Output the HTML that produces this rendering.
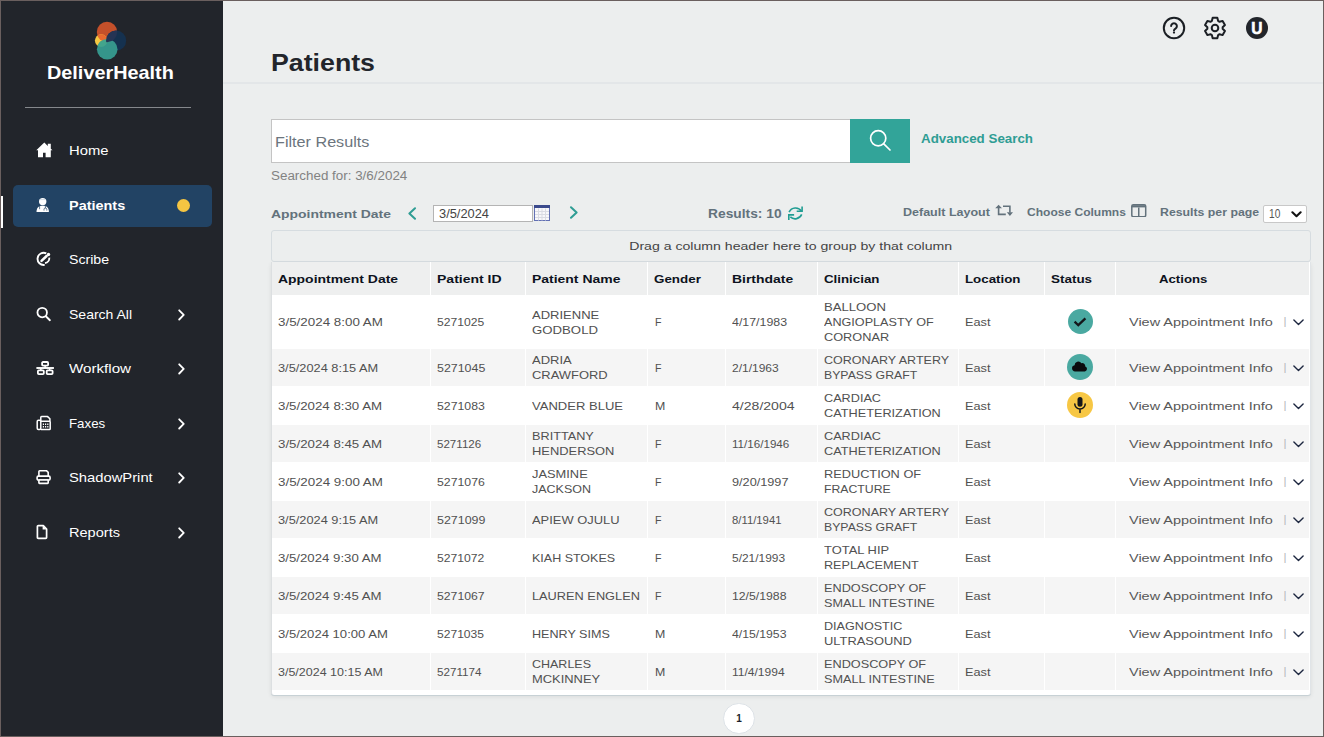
<!DOCTYPE html>
<html lang="en">
<head>
<meta charset="utf-8">
<title>Patients</title>
<style>
*{box-sizing:border-box;margin:0;padding:0}
html,body{width:1324px;height:737px;overflow:hidden}
body{font-family:"Liberation Sans",sans-serif;background:#eceeee;color:#444;position:relative;font-size:12px}
.abs{position:absolute}
.sx{display:inline-block;transform-origin:0 50%;white-space:nowrap}
.sx.ln{display:block;width:max-content}
.sx.c{transform-origin:50% 50%}
.sx.s1{position:relative;top:1px}
tr.r1 .sx.ln{position:relative;top:1px}
#frame{position:absolute;left:0;top:0;width:1324px;height:737px;border-top:1px solid #6a5f5e;border-left:1px solid #6a5f5e;border-right:1px solid #6a5f5e;border-bottom:1px solid #6a5f5e;pointer-events:none;z-index:50}
#side{position:absolute;left:0;top:0;width:223px;height:737px;background:#22252b}
#brand{position:absolute;left:46.6px;top:62px;color:#fff;font-weight:bold;font-size:19px;line-height:22px;white-space:nowrap}
#sidehr{position:absolute;left:25px;top:107px;width:166px;height:1px;background:#85888c}
.nav{position:absolute;left:13px;width:199px;height:42px;border-radius:5px;color:#fff;font-size:13.500px}
.nav.on{background:#224364;font-weight:bold}
.nav .lbl{position:absolute;left:56.3px;top:0;line-height:41px;white-space:nowrap}
.nav svg{position:absolute}
.nav .chev{left:165.100px;top:14.600px}
#bar{position:absolute;left:1px;top:196px;width:2px;height:32px;background:#fff}
#dot{position:absolute;left:176.5px;top:199px;width:13px;height:13px;border-radius:50%;background:#f5c542}
#hdrline{position:absolute;left:223px;top:82px;width:1101px;height:2px;background:#e3e6e8}
#sedge{position:absolute;left:222px;top:0;width:1px;height:737px;background:#17191d}
#sedge2{position:absolute;left:223px;top:0;width:1px;height:737px;background:#f9fafa}
#title{position:absolute;left:270.6px;top:47px;font-size:24px;font-weight:bold;color:#22252b;line-height:32px;white-space:nowrap}
#search{position:absolute;left:271px;top:119px;width:580px;height:44px;background:#fff;border:1px solid #c4c4c4}
#search .ph{position:absolute;left:3px;top:1px;line-height:43px;font-size:14.5px;color:#6c757d;white-space:nowrap}
#sbtn{position:absolute;left:850px;top:119px;width:60px;height:44px;background:#32a499}
#adv{position:absolute;left:921px;top:130px;font-size:12.5px;font-weight:bold;color:#2f9d94;line-height:18px;white-space:nowrap}
#sfor{position:absolute;left:270.6px;top:167px;font-size:12.5px;color:#828282;line-height:18px;white-space:nowrap}
#apl{position:absolute;left:271.4px;top:205px;font-size:11.500px;font-weight:bold;color:#63727c;line-height:18px;white-space:nowrap}
#dinp{position:absolute;left:433px;top:205px;width:100px;height:17px;background:#fff;border:1px solid #b4b4b4;font-size:12px;line-height:16px;padding-left:5px;color:#444;white-space:nowrap}
#res{position:absolute;left:707.600px;top:205px;font-size:13px;font-weight:bold;color:#63727c;line-height:18px;white-space:nowrap}
.tool{position:absolute;top:203px;font-size:11px;font-weight:bold;color:#63727c;line-height:18px;white-space:nowrap}
#sel{position:absolute;left:1263px;top:205px;width:44px;height:18px;background:#fff;border:1px solid #c8c8c8;border-radius:2px;font-size:12px;line-height:17px;padding-left:4.5px;color:#555}
#grp{position:absolute;left:271px;top:230px;width:1040px;height:32px;border:1px solid #d6dce0;border-radius:3px;text-align:center;line-height:30px;font-size:11.500px;color:#444;white-space:nowrap}
#tblwrap{position:absolute;left:271px;top:262px;width:1040px;height:433px;border-left:1px solid #dcdfe1;border-right:1px solid #e0e4e7;background:#fff;border-radius:0 0 3px 3px;box-shadow:0 1px 0 rgba(170,190,200,.45),0 2px 4px rgba(0,0,0,.08)}
#tbl{border-collapse:separate;border-spacing:0;table-layout:fixed;width:1038px;font-size:11.500px}
#tbl th{height:33px;background:#eeefef;text-align:left;font-weight:bold;color:#0d1220;padding:0 0 0 6px;border-left:1px solid #fff;white-space:nowrap}
#tbl th:first-child,#tbl td:first-child{border-left:none}
#tbl th:last-child,#tbl td:last-child{border-right:1px solid #fff}
#tbl td{height:38px;padding:0 0 0 6px;border-left:1px solid #fff;border-bottom:1px solid #fff;line-height:15px;color:#515151;vertical-align:middle;white-space:nowrap}
#tbl tr.r1 td{height:54px}
#tbl tr.alt td{background:#f5f5f5}
.st{display:block;width:25px;height:25px;border-radius:50%;margin-left:16.600px;position:relative}
.st.b{width:26px;height:26px;margin-left:16px;top:-1px}
.st svg{position:absolute;left:50%;top:50%;transform:translate(-50%,-50%)}
.teal{background:#4aa9a1}.yel{background:#f7c744}
td.act{position:relative}
.va{position:absolute;left:13px;top:50%;margin-top:-6.800px;color:#585858}
.pipe{position:absolute;left:167.500px;top:50%;margin-top:-7.800px;color:#b4b8bc}
.dd{position:absolute;left:177.400px;top:50%;margin-top:-2.800px}
#pg{position:absolute;left:723.400px;top:702.600px;width:31.200px;height:31.200px;border-radius:50%;background:#fff;border:1px solid #dde2e7;text-align:center;line-height:30.500px;font-size:10px;font-weight:bold;color:#1a1f2b}
.top{position:absolute;top:16px;width:24px;height:24px}
#usr{position:absolute;left:1246px;top:16.700px;width:22.200px;height:22.200px;border-radius:50%;background:#22252b;color:#fff;font-weight:bold;font-size:16px;line-height:24.500px;text-align:center;-webkit-text-stroke:.6px #fff}
</style>
</head>
<body>
<div id="side">
  <svg class="abs" style="left:90px;top:18px" width="40" height="46" viewBox="90 18 40 46">
    <circle cx="107" cy="32" r="10.2" fill="#c4502a"/>
    <circle cx="116.100" cy="40.700" r="10.100" fill="#15314f"/>
    <circle cx="101.2" cy="40.6" r="6.3" fill="#f5c842"/>
    <circle cx="107.200" cy="49.300" r="10.300" fill="#35958b"/>
    <clipPath id="cy"><circle cx="101.2" cy="40.6" r="6.3"/></clipPath>
    <circle cx="107" cy="32" r="10.2" fill="#e8692f" clip-path="url(#cy)"/>
    <circle cx="107.200" cy="49.300" r="10.300" fill="#43a48c" clip-path="url(#cy)"/>
    <clipPath id="cn"><circle cx="116.100" cy="40.700" r="10.100"/></clipPath>
    <circle cx="107" cy="32" r="10.2" fill="#253454" clip-path="url(#cn)"/>
  </svg>
  <div id="brand"><span class="sx" style="transform:scaleX(1.0440)">DeliverHealth</span></div>
  <div id="sidehr"></div>
  <div class="nav" style="top:130px"><span class="lbl"><span class="sx" style="transform:scaleX(1.0967)">Home</span></span></div>
  <div class="nav on" style="top:185px"><span class="lbl"><span class="sx" style="transform:scaleX(1.0698)">Patients</span></span></div>
  <div class="nav" style="top:239px"><span class="lbl"><span class="sx" style="transform:scaleX(1.0479)">Scribe</span></span></div>
  <div class="nav" style="top:294px"><span class="lbl"><span class="sx" style="transform:scaleX(1.0379)">Search All</span></span><svg class="chev" width="7" height="12" viewBox="0 0 7 12"><path d="M1.200 1.300 5.700 5.900 1.200 10.500" fill="none" stroke="#fff" stroke-width="1.800" stroke-linecap="round" stroke-linejoin="round"/></svg></div>
  <div class="nav" style="top:348px"><span class="lbl"><span class="sx" style="transform:scaleX(1.1219)">Workflow</span></span><svg class="chev" width="7" height="12" viewBox="0 0 7 12"><path d="M1.200 1.300 5.700 5.900 1.200 10.500" fill="none" stroke="#fff" stroke-width="1.800" stroke-linecap="round" stroke-linejoin="round"/></svg></div>
  <div class="nav" style="top:403px"><span class="lbl"><span class="sx" style="transform:scaleX(0.9846)">Faxes</span></span><svg class="chev" width="7" height="12" viewBox="0 0 7 12"><path d="M1.200 1.300 5.700 5.900 1.200 10.500" fill="none" stroke="#fff" stroke-width="1.800" stroke-linecap="round" stroke-linejoin="round"/></svg></div>
  <div class="nav" style="top:457px"><span class="lbl"><span class="sx" style="transform:scaleX(1.0934)">ShadowPrint</span></span><svg class="chev" width="7" height="12" viewBox="0 0 7 12"><path d="M1.200 1.300 5.700 5.900 1.200 10.500" fill="none" stroke="#fff" stroke-width="1.800" stroke-linecap="round" stroke-linejoin="round"/></svg></div>
  <div class="nav" style="top:512px"><span class="lbl"><span class="sx" style="transform:scaleX(1.0787)">Reports</span></span><svg class="chev" width="7" height="12" viewBox="0 0 7 12"><path d="M1.200 1.300 5.700 5.900 1.200 10.500" fill="none" stroke="#fff" stroke-width="1.800" stroke-linecap="round" stroke-linejoin="round"/></svg></div>

  <svg class="abs" style="left:36px;top:142px" width="17" height="16" viewBox="0 0 17 16"><path d="M8.3.6.3 8.3H2v6.9h5v-4.4h2.6v4.4h5.2V8.3h1.7L14.8 6.7v-5h-3v2.2z" fill="#fff"/></svg>
  <svg class="abs" style="left:36px;top:197px" width="14" height="16" viewBox="0 0 14 16"><circle cx="6.7" cy="4.6" r="3.7" fill="#fff"/><path d="M.5 15C.5 10.600 2.800 8.800 6.700 8.800S12.900 10.600 12.900 15z" fill="#fff"/><path d="M3.600 9v3.200M9.400 9v2.200M8 13.600v-1.200a1.400 1.400 0 0 1 2.800 0v1.200" fill="none" stroke="#224364" stroke-width=".7"/><path d="M3.600 2.600h6.200" stroke="#c9d3de" stroke-width=".8"/></svg>
  <svg class="abs" style="left:36px;top:251px" width="16" height="16" viewBox="0 0 16 16"><path d="M10.300 2.400A6.100 6.100 0 1 0 8.700 13.900" fill="none" stroke="#fff" stroke-width="1.900"/><path d="M13.300 6.700A5 5 0 0 1 9 12.100" fill="none" stroke="#fff" stroke-width="1.900"/><path d="M5.500 9.900 10.600 5" stroke="#fff" stroke-width="2.500" stroke-linecap="round"/><circle cx="12.500" cy="3.500" r="1.700" fill="#fff"/></svg>
  <svg class="abs" style="left:36px;top:306px" width="16" height="16" viewBox="0 0 16 16"><circle cx="6.200" cy="6.600" r="4.750" fill="none" stroke="#fff" stroke-width="1.800"/><path d="M9.800 10.300 13.900 14.200" stroke="#fff" stroke-width="1.900" stroke-linecap="round"/></svg>
  <svg class="abs" style="left:36px;top:360px" width="19" height="16" viewBox="0 0 19 16"><g fill="none" stroke="#fff" stroke-width="1.800"><rect x="6.100" y="2" width="6" height="3.700" rx=".9"/><rect x="1.900" y="10.400" width="5.900" height="3.700" rx=".9"/><rect x="10.700" y="10.400" width="5.900" height="3.700" rx=".9"/></g><path d="M.4 8h17.500" stroke="#fff" stroke-width="1.900"/><path d="M9.100 5.800v2.200M4.850 8v2.200M13.650 8v2.200" stroke="#fff" stroke-width="1.500"/></svg>
  <svg class="abs" style="left:36px;top:415px" width="16" height="16" viewBox="0 0 16 16"><g fill="none" stroke="#fff" stroke-width="1.500" stroke-linejoin="round"><rect x="1.200" y="5.300" width="3.600" height="9.200" rx="1.200"/><path d="M4.800 6.200V2.400q0-.8.800-.8h6l2.300 2.200v2.400"/><path d="M4.800 6.200h8.600q.8 0 .8.800v6.700q0 .8-.8.800H4.800"/></g><path d="M6.800 9.200h5.600M6.800 11.800h5.600" stroke="#fff" stroke-width="1.500" stroke-dasharray="1.200 1"/></svg>
  <svg class="abs" style="left:36px;top:469px" width="16" height="16" viewBox="0 0 16 16"><g fill="none" stroke="#fff" stroke-width="1.600" stroke-linejoin="round"><path d="M2.900 7V2.500q0-.8.800-.8h6.700l1.800 1.700V7"/><rect x="1.100" y="7.100" width="13" height="4" rx="1.300"/><rect x="2.900" y="11" width="9.300" height="3.400" rx=".6" fill="#22252b"/></g></svg>
  <svg class="abs" style="left:36px;top:524px" width="13" height="16" viewBox="0 0 13 16"><path d="M2.300 1.700h5l3.300 3.300v8.500q0 .9-.9.900H2.300q-.9 0-.9-.9V2.600q0-.9.900-.9z" fill="none" stroke="#fff" stroke-width="1.700" stroke-linejoin="round"/><path d="M6.600 1.500v4h4.200z" fill="#fff"/></svg>
  <div id="bar"></div>
  <div id="dot"></div>
</div>
<div id="hdrline"></div>
<div id="title"><span class="sx" style="transform:scaleX(1.1138)">Patients</span></div>

<div id="search"><span class="ph"><span class="sx" style="transform:scaleX(1.1157)">Filter Results</span></span></div>
<div id="sbtn"><svg width="24" height="24" viewBox="0 0 24 24" style="position:absolute;left:18px;top:9.200px"><circle cx="10.2" cy="10.2" r="7.6" fill="none" stroke="#fff" stroke-width="1.7"/><path d="M15.8 15.8 22 22" stroke="#fff" stroke-width="1.7" stroke-linecap="round"/></svg></div>
<div id="adv"><span class="sx" style="transform:scaleX(1.0675)">Advanced Search</span></div>
<div id="sfor"><span class="sx" style="transform:scaleX(1.0716)">Searched for: 3/6/2024</span></div>
<div id="apl"><span class="sx" style="transform:scaleX(1.2117)">Appointment Date</span></div>
<svg class="abs" style="left:407px;top:207px" width="10" height="13" viewBox="0 0 10 13"><path d="M8 1.2 2.4 6.5 8 11.8" fill="none" stroke="#2f9d94" stroke-width="2" stroke-linecap="round" stroke-linejoin="round"/></svg>
<div id="dinp"><span class="sx" style="transform:scaleX(1.0702)">3/5/2024</span></div>
<svg class="abs" style="left:534px;top:204.700px" width="16" height="16" viewBox="0 0 16 16"><rect x=".5" y=".5" width="15" height="15" fill="#f7f7fa" stroke="#6270b4"/><rect x="0" y="0" width="16" height="3" fill="#3b4a8c"/><path d="M1 6.500h14M1 9.500h14M1 12.500h14M4.500 3.500v12M8 3.500v12M11.500 3.500v12" stroke="#d9dbe3" stroke-width="1"/></svg>
<svg class="abs" style="left:569px;top:206px" width="10" height="13" viewBox="0 0 10 13"><path d="M2 1.2 7.6 6.5 2 11.8" fill="none" stroke="#2f9d94" stroke-width="2" stroke-linecap="round" stroke-linejoin="round"/></svg>
<div id="res"><span class="sx" style="transform:scaleX(1.0609)">Results: 10</span></div>
<svg class="abs" style="left:780px;top:200px" width="32" height="26" viewBox="0 0 32 26"><g fill="none" stroke="#219d93" stroke-width="1.600"><path d="M9.100 12.100A7.100 7.100 0 0 1 21.500 11.200"/><path d="M22.100 6.500V11.300H16.700" stroke-linejoin="miter"/><path d="M21.700 14.400A7.100 7.100 0 0 1 10.300 16.900"/><path d="M8.800 19.900V14.900H14.100" stroke-linejoin="miter"/></g></svg>
<div class="tool" style="left:902.9px"><span class="sx" style="transform:scaleX(1.1373)">Default Layout</span></div>
<svg class="abs" style="left:995px;top:204px" width="19" height="13" viewBox="0 0 19 13"><path d="M3.600 4V10.400H10.800M8 2.300H14.900V8.500" fill="none" stroke="#63727c" stroke-width="1.600"/><path d="M.2 4.300 3.600.7 7 4.300zM11.800 8.300 14.900 12 18 8.300z" fill="#63727c"/></svg>
<div class="tool" style="left:1027.3px"><span class="sx" style="transform:scaleX(1.0934)">Choose Columns</span></div>
<svg class="abs" style="left:1131.200px;top:203.700px" width="15.500" height="13.500" viewBox="0 0 15.500 13.500"><rect x=".8" y=".8" width="13.900" height="11.900" rx="1.500" fill="none" stroke="#63727c" stroke-width="1.500"/><path d="M.8 1.200H14.700V3.400H.8z" fill="#63727c"/><path d="M7.750 3.400V12.500" stroke="#63727c" stroke-width="1.500"/></svg>
<div class="tool" style="left:1160px"><span class="sx" style="transform:scaleX(1.1180)">Results per page</span></div>
<div id="sel"><span class="sx" style="transform:scaleX(0.8458)">10</span><svg width="11" height="7" viewBox="0 0 11 7" style="position:absolute;left:27.300px;top:5px"><path d="M1.400 1.300 5.500 5.200 9.600 1.300" fill="none" stroke="#111" stroke-width="2.100" stroke-linecap="round" stroke-linejoin="round"/></svg></div>
<div id="grp"><span class="sx c" style="transform:scaleX(1.2263)">Drag a column header here to group by that column</span></div>
<div id="tblwrap">
<table id="tbl">
<colgroup><col style="width:158px"><col style="width:95px"><col style="width:122px"><col style="width:78px"><col style="width:92px"><col style="width:141px"><col style="width:86px"><col style="width:71px"><col style="width:195px"></colgroup>
<thead><tr><th><span class="sx" style="transform:scaleX(1.2127)">Appointment Date</span></th><th><span class="sx" style="transform:scaleX(1.2178)">Patient ID</span></th><th><span class="sx" style="transform:scaleX(1.2133)">Patient Name</span></th><th><span class="sx" style="transform:scaleX(1.1648)">Gender</span></th><th><span class="sx" style="transform:scaleX(1.2123)">Birthdate</span></th><th><span class="sx" style="transform:scaleX(1.1557)">Clinician</span></th><th><span class="sx" style="transform:scaleX(1.1560)">Location</span></th><th><span class="sx" style="transform:scaleX(1.1691)">Status</span></th><th style="padding-left:42.5px"><span class="sx" style="transform:scaleX(1.1453)">Actions</span></th></tr></thead>
<tbody>
<tr class="r1"><td><span class="sx s1" style="transform:scaleX(1.1635)">3/5/2024 8:00 AM</span></td><td><span class="sx s1" style="transform:scaleX(1.0540)">5271025</span></td><td><span class="sx ln" style="transform:scaleX(1.1323)">ADRIENNE</span><span class="sx ln" style="transform:scaleX(1.1475)">GODBOLD</span></td><td style="padding-left:6.600px"><span class="sx s1" style="transform:scaleX(0.9244)">F</span></td><td><span class="sx s1" style="transform:scaleX(1.0768)">4/17/1983</span></td><td><span class="sx ln" style="transform:scaleX(1.1412)">BALLOON</span><span class="sx ln" style="transform:scaleX(1.0966)">ANGIOPLASTY OF</span><span class="sx ln" style="transform:scaleX(1.1075)">CORONAR</span></td><td><span class="sx s1" style="transform:scaleX(1.1079)">East</span></td><td class="stc"><span class="st teal"><svg width="14" height="10" viewBox="0 0 14 10" style="margin-left:-.4px"><path d="M1.600 4.600 5.300 8.200 12.400 1.400" fill="none" stroke="#14161a" stroke-width="2.300" stroke-linecap="butt" stroke-linejoin="miter"/></svg></span></td><td class="act"><span class="va sx" style="transform:scaleX(1.2588)">View Appointment Info</span><span class="pipe">|</span><svg class="dd" width="11" height="7" viewBox="0 0 11 7"><path d="M.9 1 5.500 5.400 10.100 1" fill="none" stroke="#1d2740" stroke-width="1.400" stroke-linecap="round" stroke-linejoin="round"/></svg></td></tr>
<tr class="alt"><td><span class="sx s1" style="transform:scaleX(1.1114)">3/5/2024 8:15 AM</span></td><td><span class="sx s1" style="transform:scaleX(1.0786)">5271045</span></td><td><span class="sx ln" style="transform:scaleX(1.1321)">ADRIA</span><span class="sx ln" style="transform:scaleX(1.1249)">CRAWFORD</span></td><td style="padding-left:6.600px"><span class="sx s1" style="transform:scaleX(0.9244)">F</span></td><td><span class="sx s1" style="transform:scaleX(1.0432)">2/1/1963</span></td><td><span class="sx ln" style="transform:scaleX(1.0895)">CORONARY ARTERY</span><span class="sx ln" style="transform:scaleX(1.0670)">BYPASS GRAFT</span></td><td><span class="sx s1" style="transform:scaleX(1.1079)">East</span></td><td class="stc"><span class="st b teal"><svg width="17" height="12" viewBox="0 0 17 12" style="margin-top:-.8px"><path d="M3.600 11.400a3.100 3.100 0 0 1-.5-6.150A3.700 3.700 0 0 1 9.900 3.200a3.100 3.100 0 0 1 3.900 3.200A2.600 2.600 0 0 1 13.400 11.400z" fill="#0b0c0e"/></svg></span></td><td class="act"><span class="va sx" style="transform:scaleX(1.2588)">View Appointment Info</span><span class="pipe">|</span><svg class="dd" width="11" height="7" viewBox="0 0 11 7"><path d="M.9 1 5.500 5.400 10.100 1" fill="none" stroke="#1d2740" stroke-width="1.400" stroke-linecap="round" stroke-linejoin="round"/></svg></td></tr>
<tr class=""><td><span class="sx s1" style="transform:scaleX(1.1547)">3/5/2024 8:30 AM</span></td><td><span class="sx s1" style="transform:scaleX(1.0674)">5271083</span></td><td><span class="sx s1" style="transform:scaleX(1.1331)">VANDER BLUE</span></td><td style="padding-left:6.600px"><span class="sx s1" style="transform:scaleX(1.0736)">M</span></td><td><span class="sx s1" style="transform:scaleX(1.2233)">4/28/2004</span></td><td><span class="sx ln" style="transform:scaleX(1.1011)">CARDIAC</span><span class="sx ln" style="transform:scaleX(1.1056)">CATHETERIZATION</span></td><td><span class="sx s1" style="transform:scaleX(1.1079)">East</span></td><td class="stc"><span class="st b yel"><svg width="14" height="17" viewBox="0 0 14 17"><rect x="4.5" y=".6" width="5" height="9.6" rx="2.5" fill="#14161a"/><path d="M1.8 7.4a5.2 5.2 0 0 0 10.4 0M7 12.8V16" fill="none" stroke="#14161a" stroke-width="1.5" stroke-linecap="round"/></svg></span></td><td class="act"><span class="va sx" style="transform:scaleX(1.2588)">View Appointment Info</span><span class="pipe">|</span><svg class="dd" width="11" height="7" viewBox="0 0 11 7"><path d="M.9 1 5.500 5.400 10.100 1" fill="none" stroke="#1d2740" stroke-width="1.400" stroke-linecap="round" stroke-linejoin="round"/></svg></td></tr>
<tr class="alt"><td><span class="sx s1" style="transform:scaleX(1.1547)">3/5/2024 8:45 AM</span></td><td><span class="sx s1" style="transform:scaleX(1.0063)">5271126</span></td><td><span class="sx ln" style="transform:scaleX(1.1033)">BRITTANY</span><span class="sx ln" style="transform:scaleX(1.1213)">HENDERSON</span></td><td style="padding-left:6.600px"><span class="sx s1" style="transform:scaleX(0.9244)">F</span></td><td><span class="sx s1" style="transform:scaleX(1.0105)">11/16/1946</span></td><td><span class="sx ln" style="transform:scaleX(1.1011)">CARDIAC</span><span class="sx ln" style="transform:scaleX(1.1056)">CATHETERIZATION</span></td><td><span class="sx s1" style="transform:scaleX(1.1079)">East</span></td><td class="stc"></td><td class="act"><span class="va sx" style="transform:scaleX(1.2588)">View Appointment Info</span><span class="pipe">|</span><svg class="dd" width="11" height="7" viewBox="0 0 11 7"><path d="M.9 1 5.500 5.400 10.100 1" fill="none" stroke="#1d2740" stroke-width="1.400" stroke-linecap="round" stroke-linejoin="round"/></svg></td></tr>
<tr class=""><td><span class="sx s1" style="transform:scaleX(1.1635)">3/5/2024 9:00 AM</span></td><td><span class="sx s1" style="transform:scaleX(1.0674)">5271076</span></td><td><span class="sx ln" style="transform:scaleX(1.1175)">JASMINE</span><span class="sx ln" style="transform:scaleX(1.0860)">JACKSON</span></td><td style="padding-left:6.600px"><span class="sx s1" style="transform:scaleX(0.9244)">F</span></td><td><span class="sx s1" style="transform:scaleX(1.1041)">9/20/1997</span></td><td><span class="sx ln" style="transform:scaleX(1.1093)">REDUCTION OF</span><span class="sx ln" style="transform:scaleX(1.0651)">FRACTURE</span></td><td><span class="sx s1" style="transform:scaleX(1.1079)">East</span></td><td class="stc"></td><td class="act"><span class="va sx" style="transform:scaleX(1.2588)">View Appointment Info</span><span class="pipe">|</span><svg class="dd" width="11" height="7" viewBox="0 0 11 7"><path d="M.9 1 5.500 5.400 10.100 1" fill="none" stroke="#1d2740" stroke-width="1.400" stroke-linecap="round" stroke-linejoin="round"/></svg></td></tr>
<tr class="alt"><td><span class="sx s1" style="transform:scaleX(1.1114)">3/5/2024 9:15 AM</span></td><td><span class="sx s1" style="transform:scaleX(1.0808)">5271099</span></td><td><span class="sx s1" style="transform:scaleX(1.1235)">APIEW OJULU</span></td><td style="padding-left:6.600px"><span class="sx s1" style="transform:scaleX(0.9244)">F</span></td><td><span class="sx s1" style="transform:scaleX(0.9839)">8/11/1941</span></td><td><span class="sx ln" style="transform:scaleX(1.0895)">CORONARY ARTERY</span><span class="sx ln" style="transform:scaleX(1.0670)">BYPASS GRAFT</span></td><td><span class="sx s1" style="transform:scaleX(1.1079)">East</span></td><td class="stc"></td><td class="act"><span class="va sx" style="transform:scaleX(1.2588)">View Appointment Info</span><span class="pipe">|</span><svg class="dd" width="11" height="7" viewBox="0 0 11 7"><path d="M.9 1 5.500 5.400 10.100 1" fill="none" stroke="#1d2740" stroke-width="1.400" stroke-linecap="round" stroke-linejoin="round"/></svg></td></tr>
<tr class=""><td><span class="sx s1" style="transform:scaleX(1.1480)">3/5/2024 9:30 AM</span></td><td><span class="sx s1" style="transform:scaleX(1.0562)">5271072</span></td><td><span class="sx s1" style="transform:scaleX(1.0865)">KIAH STOKES</span></td><td style="padding-left:6.600px"><span class="sx s1" style="transform:scaleX(0.9244)">F</span></td><td><span class="sx s1" style="transform:scaleX(1.0377)">5/21/1993</span></td><td><span class="sx ln" style="transform:scaleX(1.1233)">TOTAL HIP</span><span class="sx ln" style="transform:scaleX(1.0987)">REPLACEMENT</span></td><td><span class="sx s1" style="transform:scaleX(1.1079)">East</span></td><td class="stc"></td><td class="act"><span class="va sx" style="transform:scaleX(1.2588)">View Appointment Info</span><span class="pipe">|</span><svg class="dd" width="11" height="7" viewBox="0 0 11 7"><path d="M.9 1 5.500 5.400 10.100 1" fill="none" stroke="#1d2740" stroke-width="1.400" stroke-linecap="round" stroke-linejoin="round"/></svg></td></tr>
<tr class="alt"><td><span class="sx s1" style="transform:scaleX(1.1480)">3/5/2024 9:45 AM</span></td><td><span class="sx s1" style="transform:scaleX(1.0629)">5271067</span></td><td><span class="sx s1" style="transform:scaleX(1.1108)">LAUREN ENGLEN</span></td><td style="padding-left:6.600px"><span class="sx s1" style="transform:scaleX(0.9244)">F</span></td><td><span class="sx s1" style="transform:scaleX(1.0650)">12/5/1988</span></td><td><span class="sx ln" style="transform:scaleX(1.1043)">ENDOSCOPY OF</span><span class="sx ln" style="transform:scaleX(1.1010)">SMALL INTESTINE</span></td><td><span class="sx s1" style="transform:scaleX(1.1079)">East</span></td><td class="stc"></td><td class="act"><span class="va sx" style="transform:scaleX(1.2588)">View Appointment Info</span><span class="pipe">|</span><svg class="dd" width="11" height="7" viewBox="0 0 11 7"><path d="M.9 1 5.500 5.400 10.100 1" fill="none" stroke="#1d2740" stroke-width="1.400" stroke-linecap="round" stroke-linejoin="round"/></svg></td></tr>
<tr class=""><td><span class="sx s1" style="transform:scaleX(1.1381)">3/5/2024 10:00 AM</span></td><td><span class="sx s1" style="transform:scaleX(1.0495)">5271035</span></td><td><span class="sx s1" style="transform:scaleX(1.0948)">HENRY SIMS</span></td><td style="padding-left:6.600px"><span class="sx s1" style="transform:scaleX(1.0736)">M</span></td><td><span class="sx s1" style="transform:scaleX(1.0650)">4/15/1953</span></td><td><span class="sx ln" style="transform:scaleX(1.0955)">DIAGNOSTIC</span><span class="sx ln" style="transform:scaleX(1.1213)">ULTRASOUND</span></td><td><span class="sx s1" style="transform:scaleX(1.1079)">East</span></td><td class="stc"></td><td class="act"><span class="va sx" style="transform:scaleX(1.2588)">View Appointment Info</span><span class="pipe">|</span><svg class="dd" width="11" height="7" viewBox="0 0 11 7"><path d="M.9 1 5.500 5.400 10.100 1" fill="none" stroke="#1d2740" stroke-width="1.400" stroke-linecap="round" stroke-linejoin="round"/></svg></td></tr>
<tr class="alt"><td><span class="sx s1" style="transform:scaleX(1.0863)">3/5/2024 10:15 AM</span></td><td><span class="sx s1" style="transform:scaleX(1.0132)">5271174</span></td><td><span class="sx ln" style="transform:scaleX(1.0860)">CHARLES</span><span class="sx ln" style="transform:scaleX(1.1219)">MCKINNEY</span></td><td style="padding-left:6.600px"><span class="sx s1" style="transform:scaleX(1.0736)">M</span></td><td><span class="sx s1" style="transform:scaleX(1.0455)">11/4/1994</span></td><td><span class="sx ln" style="transform:scaleX(1.1043)">ENDOSCOPY OF</span><span class="sx ln" style="transform:scaleX(1.1010)">SMALL INTESTINE</span></td><td><span class="sx s1" style="transform:scaleX(1.1079)">East</span></td><td class="stc"></td><td class="act"><span class="va sx" style="transform:scaleX(1.2588)">View Appointment Info</span><span class="pipe">|</span><svg class="dd" width="11" height="7" viewBox="0 0 11 7"><path d="M.9 1 5.500 5.400 10.100 1" fill="none" stroke="#1d2740" stroke-width="1.400" stroke-linecap="round" stroke-linejoin="round"/></svg></td></tr>
</tbody>
</table>
</div>
<div id="pg">1</div>
<div class="top" style="left:1161.5px"><svg width="24" height="24" viewBox="0 0 24 24"><circle cx="12" cy="12" r="10.2" fill="none" stroke="#1b1f24" stroke-width="2"/><path d="M9.100 10.100a2.900 2.900 0 1 1 4.400 2.500c-1 .6-1.500 1.100-1.500 1.900" fill="none" stroke="#1b1f24" stroke-width="2" stroke-linecap="round"/><circle cx="12" cy="16.600" r="1.150" fill="#1b1f24"/></svg></div>
<div class="top" style="left:1203.3px"><svg width="24" height="24" viewBox="0 0 24 24"><g fill="none" stroke="#1b1f24" stroke-width="2" stroke-linejoin="round"><path d="M8.87 4.97 L9.66 1.87 L14.34 1.87 L15.13 4.97 L16.53 5.77 L19.61 4.91 L21.95 8.96 L19.66 11.20 L19.66 12.80 L21.95 15.04 L19.61 19.09 L16.53 18.23 L15.13 19.03 L14.34 22.13 L9.66 22.13 L8.87 19.03 L7.47 18.23 L4.39 19.09 L2.05 15.04 L4.34 12.80 L4.34 11.20 L2.05 8.96 L4.39 4.91 L7.47 5.77Z"/><circle cx="12" cy="12" r="3.300"/></g></svg></div>
<div id="usr"><span class="sx c" style="transform:scaleX(0.9686)">U</span></div>
<div id="frame"></div>
</body>
</html>
